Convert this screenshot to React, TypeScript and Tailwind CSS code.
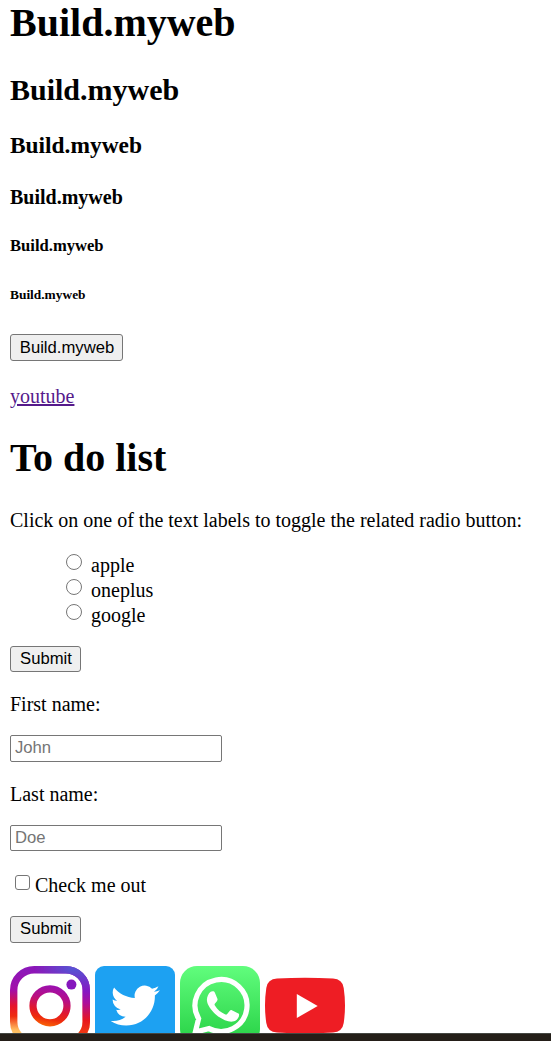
import type { ReactNode } from 'react';

function Button({ children, className }: { children: ReactNode; className: string }) {
  return (
    <button
      type="button"
      className={`block rounded-[3px] border border-[#767676] bg-[#efefef] pl-px text-center font-['Liberation_Sans',sans-serif] text-[16.67px] text-black ${className}`}
    >
      {children}
    </button>
  );
}

function TextField({ id, placeholder, className }: { id: string; placeholder: string; className: string }) {
  return (
    <input
      id={id}
      type="text"
      placeholder={placeholder}
      className={`block w-[212px] rounded-[2px] border border-[#767676] bg-white px-[4px] font-['Liberation_Sans',sans-serif] text-[16.67px] leading-[20px] placeholder:text-[#757575] ${className}`}
    />
  );
}

function Instagram() {
  return (
    <svg width="80" height="80" viewBox="0 0 80 80" className="shrink-0">
      <defs>
        <linearGradient id="ig" gradientUnits="userSpaceOnUse" x1="44" y1="20" x2="36" y2="61">
          <stop offset="0" stopColor="#9a10b0" />
          <stop offset="0.3" stopColor="#b80f85" />
          <stop offset="0.6" stopColor="#e0182f" />
          <stop offset="0.8" stopColor="#ee2c0c" />
          <stop offset="1" stopColor="#fa6a06" />
        </linearGradient>
        <linearGradient id="igFrame" x1="0" y1="0" x2="0" y2="1">
          <stop offset="0" stopColor="#8c17b9" />
          <stop offset="0.28" stopColor="#a30fa8" />
          <stop offset="0.5" stopColor="#e6142b" />
          <stop offset="0.64" stopColor="#ef2c10" />
          <stop offset="0.82" stopColor="#ffb85c" />
          <stop offset="1" stopColor="#ffe080" />
        </linearGradient>
        <linearGradient id="igRight" x1="0" y1="0" x2="0" y2="1">
          <stop offset="0" stopColor="#5851d2" />
          <stop offset="0.3" stopColor="#8617c2" />
          <stop offset="0.46" stopColor="#ad0e9b" />
          <stop offset="0.7" stopColor="#e8171c" />
          <stop offset="1" stopColor="#f4510b" />
        </linearGradient>
        <linearGradient id="igFade" x1="0" y1="0" x2="1" y2="0">
          <stop offset="0.3" stopColor="#fff" stopOpacity="0" />
          <stop offset="0.75" stopColor="#fff" />
        </linearGradient>
        <mask id="igMask">
          <rect width="80" height="80" fill="url(#igFade)" />
        </mask>
      </defs>
      <rect x="3.7" y="3.7" width="72.6" height="72.6" rx="20.5" fill="none" stroke="url(#igFrame)" strokeWidth="7.4" />
      <g mask="url(#igMask)">
        <rect x="3.7" y="3.7" width="72.6" height="72.6" rx="20.5" fill="none" stroke="url(#igRight)" strokeWidth="7.4" />
      </g>
      <circle cx="40" cy="39.8" r="17" fill="none" stroke="url(#ig)" strokeWidth="7.2" />
      <circle cx="61.4" cy="18.6" r="5" fill="#8617bd" />
    </svg>
  );
}

function Twitter() {
  return (
    <svg width="80" height="80" viewBox="0 0 80 80" className="shrink-0">
      <rect width="80" height="80" rx="9" fill="#1da1f2" />
      <path
        transform="translate(15.7 14.9) scale(2.05)"
        fill="#fff"
        d="M23.953 4.57a10 10 0 01-2.825.775 4.958 4.958 0 002.163-2.723c-.951.555-2.005.959-3.127 1.184a4.92 4.92 0 00-8.384 4.482C7.69 8.095 4.067 6.13 1.64 3.162a4.822 4.822 0 00-.666 2.475c0 1.71.87 3.213 2.188 4.096a4.904 4.904 0 01-2.228-.616v.06a4.923 4.923 0 003.946 4.827 4.996 4.996 0 01-2.212.085 4.936 4.936 0 004.604 3.417 9.867 9.867 0 01-6.102 2.105c-.39 0-.779-.023-1.17-.067a13.995 13.995 0 007.557 2.209c9.053 0 13.998-7.496 13.998-13.985 0-.21 0-.42-.015-.63A9.935 9.935 0 0024 4.59z"
      />
    </svg>
  );
}

function WhatsApp() {
  return (
    <svg width="80" height="80" viewBox="0 0 80 80" className="shrink-0">
      <defs>
        <linearGradient id="wa" x1="0" y1="0" x2="0" y2="1">
          <stop offset="0" stopColor="#61fd7d" />
          <stop offset="1" stopColor="#25cf43" />
        </linearGradient>
      </defs>
      <rect width="80" height="80" rx="17" fill="url(#wa)" />
      <path
        fill="none"
        stroke="#fff"
        strokeWidth="5.2"
        d="M15.3 66.1 L18.6 52.6 A26 26 0 1 1 29.2 62.6 Z"
      />
      <path
        fill="#fff"
        d="M31.8 26.2c1.5-.2 2.3.1 2.9 1.4l2.5 6c.4 1-.1 1.9-.7 2.7l-1.7 2.1c-.6.7-.6 1.2-.1 2 2.7 4.4 6 7 10.5 8.8.8.3 1.3.2 1.8-.4l2.6-3.2c.6-.8 1.2-.9 2.1-.5l6 2.9c1 .5 1.3.8 1.2 1.7-.3 3.7-2.8 6-6.4 6.7-4.1.8-11.6-2.5-16.9-7.2-4.2-3.8-8.7-9.2-8.9-14.4-.1-3.2 1.7-6.7 3.5-8.1.5-.4 1-.5 1.6-.5z"
        transform="translate(0.2 -0.8)"
      />
    </svg>
  );
}

function YouTube() {
  return (
    <svg width="80" height="80" viewBox="0 0 80 80" className="shrink-0">
      <path
        fill="#ee1d24"
        d="M12 12.6Q40 10.8 68 12.6Q77.5 13.2 78.7 22Q81.3 39.5 78.7 57Q77.5 65.8 68 66.5Q40 68.2 12 66.5Q2.5 65.8 1.3 57Q-1.3 39.5 1.3 22Q2.5 13.2 12 12.6Z"
      />
      <path fill="#fff" d="M31.8 28V52L52.7 40Z" />
    </svg>
  );
}

export default function App() {
  return (
    <div className="flex h-[1041px] w-full flex-col overflow-hidden bg-white font-['Liberation_Serif',serif] text-[20px] leading-[22px] text-black">
      <main className="h-[1033px] shrink-0 overflow-hidden pl-[10px]">
        <h1 className="text-[40px] leading-[46px] font-bold">Build.myweb</h1>
        <h2 className="mt-[27px] text-[30px] leading-[34px] font-bold">Build.myweb</h2>
        <h3 className="mt-[25px] text-[23.4px] leading-[26px] font-bold">Build.myweb</h3>
        <h4 className="mt-[28px] text-[20px] leading-[22px] font-bold">Build.myweb</h4>
        <h5 className="mt-[29px] text-[16.6px] leading-[18px] font-bold">Build.myweb</h5>
        <h6 className="mt-[32px] text-[13.4px] leading-[16px] font-bold">Build.myweb</h6>

        <Button className="mt-[31px] h-[27px] w-[113px] leading-[24px]">Build.myweb</Button>
        <p className="mt-[24px]">
          <a href="#" className="text-[#551a8b] underline">youtube</a>
        </p>

        <h1 className="mt-[28px] text-[40px] leading-[46px] font-bold">To do list</h1>
        <p className="mt-[28px] whitespace-nowrap">Click on one of the text labels to toggle the related radio button:</p>

        <form>
          <div className="mt-[21px] pl-[56px]">
            {['apple', 'oneplus', 'google'].map((name) => (
              <label key={name} className="flex h-[25px] items-start leading-[27px]">
                <input
                  type="radio"
                  name="brand"
                  className="mt-[2px] mr-[9px] size-[16px] appearance-none rounded-full border border-[#767676] bg-white"
                />
                {name}
              </label>
            ))}
          </div>
          <Button className="mt-[19px] h-[26px] w-[71px] leading-[24px]">Submit</Button>
        </form>

        <form>
          <label htmlFor="first" className="mt-[21px] block">First name:</label>
          <TextField id="first" placeholder="John" className="mt-[20px] h-[27px] pb-[2px]" />
          <label htmlFor="last" className="mt-[21px] block">Last name:</label>
          <TextField id="last" placeholder="Doe" className="mt-[20px] h-[26px]" />
          <label className="mt-[22px] flex h-[22px] items-start pl-[5px] leading-[24px]">
            <input
              type="checkbox"
              className="mt-[2px] mr-[5px] size-[15px] appearance-none rounded-[3px] border border-[#767676] bg-white"
            />
            Check me out
          </label>
          <Button className="mt-[21px] h-[27px] w-[71px] pb-[2px] leading-[23px]">Submit</Button>
        </form>

        <div className="mt-[23px] flex gap-[5px]">
          <Instagram />
          <Twitter />
          <WhatsApp />
          <YouTube />
        </div>
      </main>
      <div className="h-[8px] shrink-0 border-t border-[#454743] bg-[#241e18]" />
    </div>
  );
}
